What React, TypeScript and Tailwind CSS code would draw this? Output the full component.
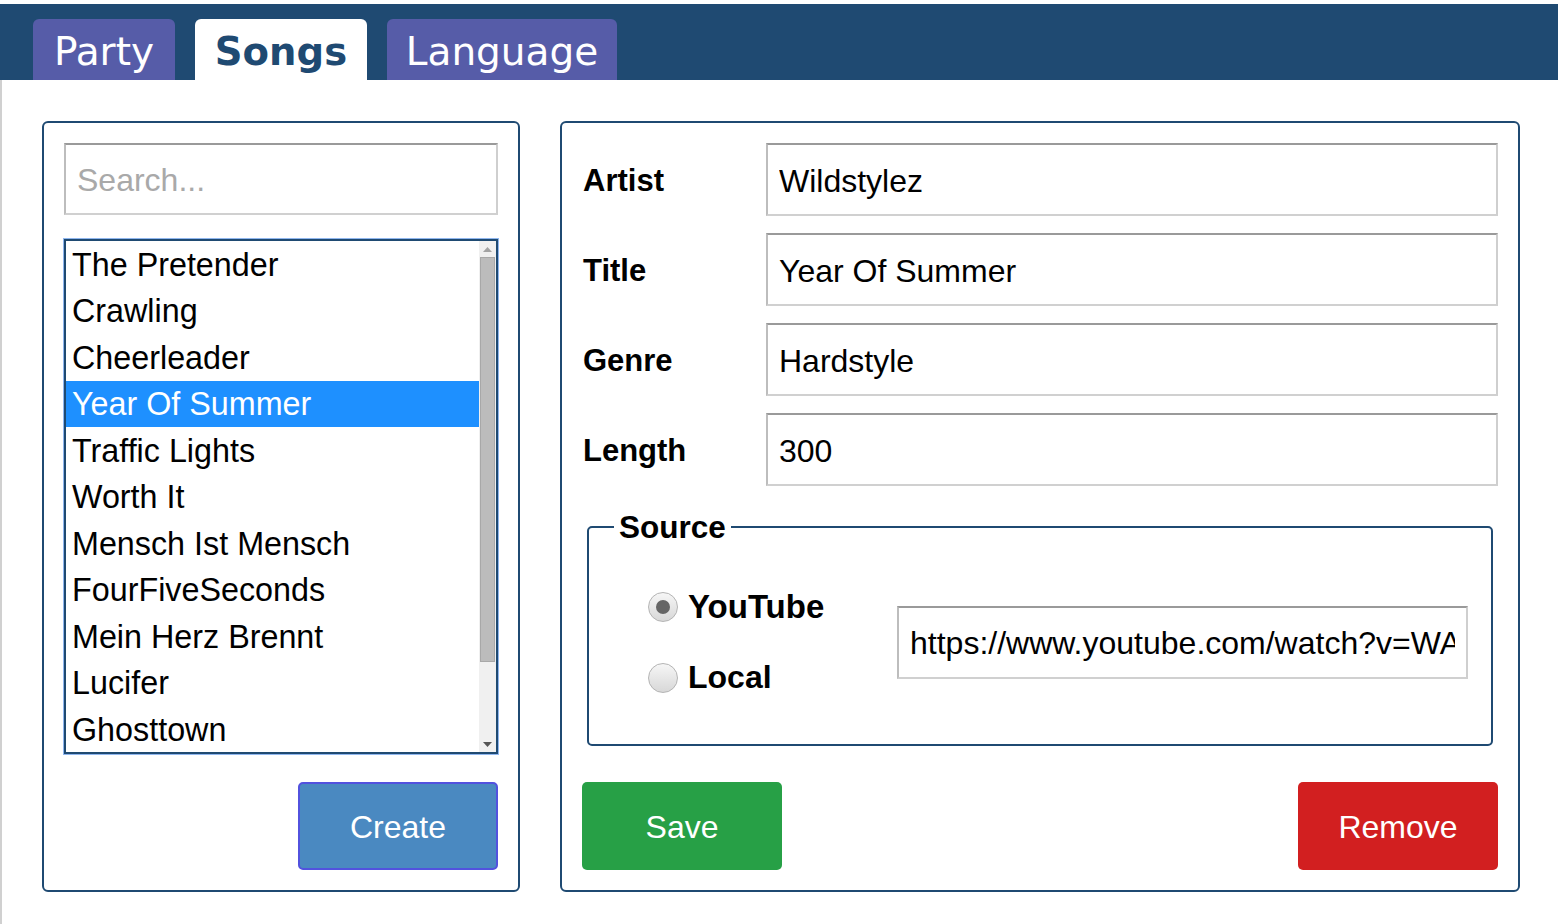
import * as React from "react"

const tabs = [
  { name: "Party", active: false, width: "w-[142px]" },
  { name: "Songs", active: true, width: "w-[172px]" },
  { name: "Language", active: false, width: "w-[230px]" },
]

const songs = [
  "The Pretender",
  "Crawling",
  "Cheerleader",
  "Year Of Summer",
  "Traffic Lights",
  "Worth It",
  "Mensch Ist Mensch",
  "FourFiveSeconds",
  "Mein Herz Brennt",
  "Lucifer",
  "Ghosttown",
]

const fields = [
  { label: "Artist", value: "Wildstylez" },
  { label: "Title", value: "Year Of Summer" },
  { label: "Genre", value: "Hardstyle" },
  { label: "Length", value: "300" },
]

const inputCls =
  "h-[73px] border-2 border-t-[#9a9a9a] border-l-[#bdbdbd] border-r-[#cfcfcf] border-b-[#d0d0d0] px-[11px] pt-[3px] text-[32px] outline-none"

function Radio({ checked }: { checked?: boolean }) {
  return (
    <span className="flex h-[30px] w-[30px] items-center justify-center rounded-full border border-[#b4b4b4] bg-gradient-to-b from-[#f6f6f6] to-[#d8d8d8]">
      {checked && <span className="h-[14px] w-[14px] rounded-full bg-[#656565]" />}
    </span>
  )
}

export default function App() {
  const [selected, setSelected] = React.useState("Year Of Summer")
  const [source, setSource] = React.useState("youtube")

  return (
    <div className="min-h-screen bg-white font-['Liberation_Sans',Arial,sans-serif] text-black">
      <header className="mt-[4px] flex h-[76px] items-end gap-[20px] bg-[#1f4a72] pl-[33px] font-['DejaVu_Sans',Verdana,sans-serif]">
        {tabs.map((tab) => (
          <div
            key={tab.name}
            className={
              tab.active
                ? `flex h-[61px] ${tab.width} items-center justify-center rounded-t-[6px] bg-white pt-[5px] text-[38.6px] font-bold text-[#1f4a72]`
                : `flex h-[61px] ${tab.width} items-center justify-center rounded-t-[6px] bg-[#565ca8] pt-[5px] text-[39px] text-white`
            }
          >
            {tab.name}
          </div>
        ))}
      </header>

      <main className="flex min-h-[844px] gap-[40px] border-l-2 border-[#d0d0d0] pl-[40px] pt-[41px]">
        {/* song list */}
        <section className="flex h-[771px] w-[478px] flex-col rounded-[6px] border-2 border-[#1f4a72] p-[20px]">
          <input placeholder="Search..." className={`${inputCls} w-full placeholder:text-[#a9a9a9]`} />
          <div className="mt-[24px] flex h-[515px] border-2 border-[#1f4a72] shadow-[0_0_0_1px_#8fb6ee]">
            <ul className="flex-1 overflow-hidden">
              {songs.map((song) => (
                <li
                  key={song}
                  onClick={() => setSelected(song)}
                  className={
                    song === selected
                      ? "flex h-[46.5px] items-center bg-[#1e90ff] px-[6px] pt-[1px] text-[32.3px] text-white"
                      : "flex h-[46.5px] items-center px-[6px] pt-[1px] text-[32.3px]"
                  }
                >
                  {song}
                </li>
              ))}
            </ul>
            <div className="flex w-[17px] flex-col bg-[#f0f0f0]">
              <div className="flex h-[16px] items-center justify-center">
                <svg width="9" height="5" viewBox="0 0 9 5">
                  <path d="M0 5 L4.5 0 L9 5 Z" fill="#a3a3a3" />
                </svg>
              </div>
              <div className="mx-[1px] h-[405px] border border-[#a8a8a8] bg-[#bcbcbc]" />
              <div className="flex-1" />
              <div className="flex h-[16px] items-center justify-center">
                <svg width="9" height="5" viewBox="0 0 9 5">
                  <path d="M0 0 L9 0 L4.5 5 Z" fill="#555" />
                </svg>
              </div>
            </div>
          </div>
          <div className="mt-[28px] flex justify-end">
            <button className="h-[88px] w-[200px] rounded-[5px] border-2 border-[#5252de] bg-[#4a89c1] pt-[2px] text-[32px] text-white">
              Create
            </button>
          </div>
        </section>

        {/* song details */}
        <section className="flex h-[771px] w-[960px] flex-col rounded-[6px] border-2 border-[#1f4a72] p-[20px]">
          <div className="flex flex-col gap-[17px]">
            {fields.map((f) => (
              <div key={f.label} className="flex items-center">
                <label className="w-[184px] pl-[1px] pt-[3px] text-[31px] font-bold">{f.label}</label>
                <input readOnly value={f.value} className={`${inputCls} flex-1`} />
              </div>
            ))}
          </div>

          <fieldset className="mx-[5px] mt-[24px] h-[237px] rounded-[5px] border-2 border-[#1f4a72]">
            <legend className="ml-[25px] px-[5px] text-[31.5px] font-bold leading-[34px]">Source</legend>
            <div className="flex items-center pl-[59px] pr-[23px] pt-[47px]">
              <div className="flex w-[249px] flex-col gap-[40px]">
                <label
                  className="flex cursor-pointer items-center gap-[10px] text-[33px] font-bold leading-[31px]"
                  onClick={() => setSource("youtube")}
                >
                  <Radio checked={source === "youtube"} />
                  YouTube
                </label>
                <label
                  className="flex cursor-pointer items-center gap-[10px] text-[32px] font-bold leading-[31px]"
                  onClick={() => setSource("local")}
                >
                  <Radio checked={source === "local"} />
                  Local
                </label>
              </div>
              <input readOnly value="https://www.youtube.com/watch?v=WAdl1uNG3ng" className={`${inputCls} flex-1`} />
            </div>
          </fieldset>

          <div className="mt-[36px] flex justify-between">
            <button className="h-[88px] w-[200px] rounded-[5px] bg-[#27a046] pt-[2px] text-[32px] text-white">Save</button>
            <button className="h-[88px] w-[200px] rounded-[5px] bg-[#d21f20] pt-[2px] text-[32px] text-white">Remove</button>
          </div>
        </section>
      </main>
    </div>
  )
}
